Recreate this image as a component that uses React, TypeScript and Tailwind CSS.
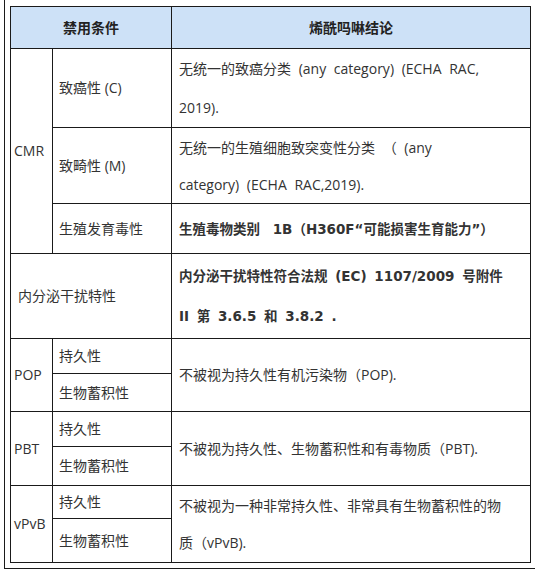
// App.tsx — 禁用条件 / 烯酰吗啉结论 table

const FONT = '"Open Sans", "Noto Sans CJK SC", sans-serif'
const BOLD_FONT = '"DejaVu Sans", "Noto Sans CJK SC", sans-serif'

const cell = 'border border-[#1a1a1a] align-middle'
const body = `${cell} pl-[7px] [word-spacing:4px]`

export default function App() {
  return (
    <div className="w-[535px] h-[574px] bg-white overflow-hidden" style={{ fontFamily: FONT }}>
      <div className="ml-[4px] w-[531px] border-l border-b border-[#1a1a1a] pt-[6px] pl-[5px] pb-[5px]">
        <table className="table-fixed border-collapse w-[520px] text-[14px] leading-[20px] text-[#333]">
          <colgroup>
            <col className="w-[42px]" />
            <col className="w-[119px]" />
            <col className="w-[359px]" />
          </colgroup>
          <thead>
            <tr className="h-[42px] bg-[#cde1f7]">
              <th colSpan={2} className={`${cell} font-bold text-[#222] text-center`}>禁用条件</th>
              <th className={`${cell} font-bold text-[#222] text-center`}>烯酰吗啉结论</th>
            </tr>
          </thead>
          <tbody>
            <tr className="h-[79px]">
              <td rowSpan={3} className={`${cell} pl-[3px]`}>CMR</td>
              <td className={`${cell} pl-[6px]`}>致癌性 (C)</td>
              <td className={`${body} leading-[39px]`}>
                无统一的致癌分类 (any category) (ECHA RAC,<br />2019).
              </td>
            </tr>
            <tr className="h-[76px]">
              <td className={`${cell} pl-[6px]`}>致畸性 (M)</td>
              <td className={`${body} leading-[37px]`}>
                无统一的生殖细胞致突变性分类 （ (any<br />category) (ECHA RAC,2019).
              </td>
            </tr>
            <tr className="h-[50px]">
              <td className={`${cell} pl-[6px]`}>生殖发育毒性</td>
              <td className={`${cell} pl-[7px] [word-spacing:8px] font-bold text-[13.5px]`} style={{ fontFamily: BOLD_FONT }}>
                生殖毒物类别 1B（H360F“可能损害生育能力”）
              </td>
            </tr>
            <tr className="h-[85px]">
              <td colSpan={2} className={`${cell} pl-[7px]`}>内分泌干扰特性</td>
              <td className={`${cell} pl-[7px] [word-spacing:3px] font-bold text-[13.5px] leading-[40px]`} style={{ fontFamily: BOLD_FONT }}>
                内分泌干扰特性符合法规 (EC) 1107/2009 号附件<br />II 第 3.6.5 和 3.8.2 .
              </td>
            </tr>

            <tr className="h-[35px]">
              <td rowSpan={2} className={`${cell} pl-[3px]`}>POP</td>
              <td className={`${cell} pl-[6px]`}>持久性</td>
              <td rowSpan={2} className={body}>不被视为持久性有机污染物（POP).</td>
            </tr>
            <tr className="h-[38px]">
              <td className={`${cell} pl-[6px]`}>生物蓄积性</td>
            </tr>

            <tr className="h-[35px]">
              <td rowSpan={2} className={`${cell} pl-[3px]`}>PBT</td>
              <td className={`${cell} pl-[6px]`}>持久性</td>
              <td rowSpan={2} className={body}>不被视为持久性、生物蓄积性和有毒物质（PBT).</td>
            </tr>
            <tr className="h-[39px]">
              <td className={`${cell} pl-[6px]`}>生物蓄积性</td>
            </tr>

            <tr className="h-[33px]">
              <td rowSpan={2} className={`${cell} pl-[3px]`}>vPvB</td>
              <td className={`${cell} pl-[6px]`}>持久性</td>
              <td rowSpan={2} className={`${body} leading-[37px]`}>
                不被视为一种非常持久性、非常具有生物蓄积性的物<br />质（vPvB).
              </td>
            </tr>
            <tr className="h-[44px]">
              <td className={`${cell} pl-[6px]`}>生物蓄积性</td>
            </tr>
          </tbody>
        </table>
      </div>
    </div>
  )
}
